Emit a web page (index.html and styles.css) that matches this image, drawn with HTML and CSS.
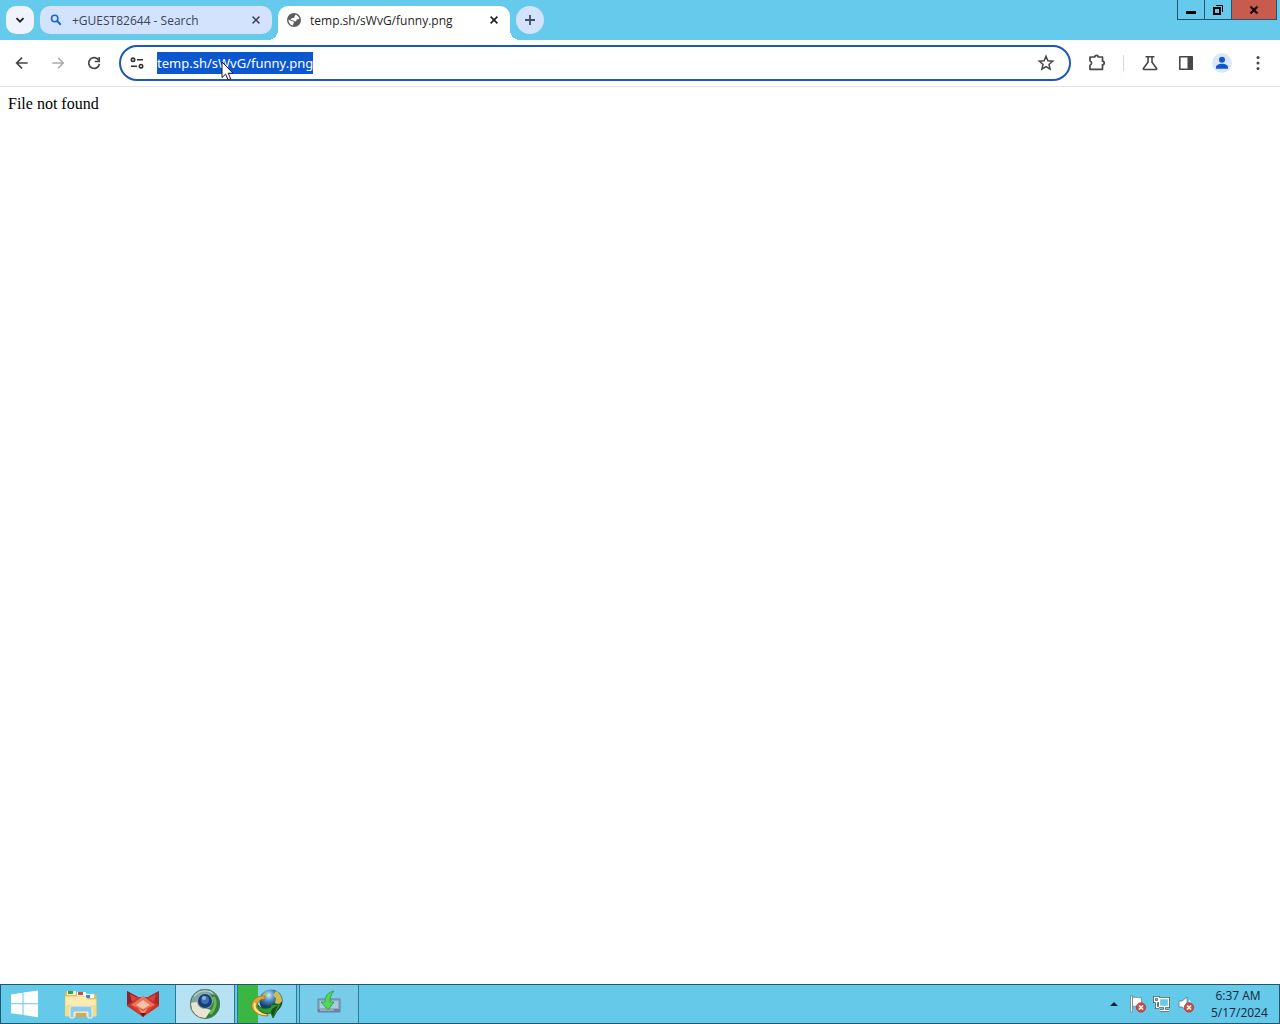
FILE: index.html
```html
<!DOCTYPE html>
<html lang="en">
<head>
<meta charset="UTF-8" />
<meta name="viewport" content="width=device-width, initial-scale=1.0" />
<title>temp.sh/sWvG/funny.png</title>
<link rel="stylesheet" href="styles.css">
</head>
<body>
  <header class="tab-strip">
    <button class="tab-search" aria-label="Search tabs">
      <svg width="10" height="10" viewBox="0 0 10 10"><path d="M1.5 3.2 5 6.7 8.5 3.2" fill="none" stroke="#1f1f1f" stroke-width="1.8"/></svg>
    </button>
    <div class="tab">
      <svg class="tab-icon" width="16" height="16" viewBox="0 0 16 16"><circle cx="6.7" cy="6.5" r="3.2" fill="none" stroke="#1b6ac9" stroke-width="1.6"/><path d="m9.2 9 3.6 3.8" stroke="#1b6ac9" stroke-width="2"/></svg>
      <span class="tab-title">+GUEST82644 - Search</span>
      <button class="tab-close" aria-label="Close tab">
        <svg width="8" height="8" viewBox="0 0 8 8"><path d="m.6.6 6.8 6.8M7.4.6.6 7.4" stroke="#3c4658" stroke-width="1.5"/></svg>
      </button>
    </div>
    <div class="tab active">
      <svg class="tab-icon" width="16" height="16" viewBox="0 0 16 16"><circle cx="8" cy="8" r="7" fill="#5b5d61"/><path d="M2.5 7.5 6 9.300l1.500.2.5 1.500-1 1 .2 1.500C4.500 13.200 2.300 11 2.500 7.500zM9.500 2.700c2 .6 3.300 2 3.900 3.900l-1.400.9-1.400-.2-.3 1.700-1.500.6-1.500-1.200-2.300-.3-.2-1.200 1.700-.9 1.800-.3.300-1.500z" fill="#fff"/></svg>
      <span class="tab-title">temp.sh/sWvG/funny.png</span>
      <button class="tab-close" aria-label="Close tab">
        <svg width="8" height="8" viewBox="0 0 8 8"><path d="m.6.6 6.8 6.8M7.4.6.6 7.4" stroke="#1f1f1f" stroke-width="1.6"/></svg>
      </button>
    </div>
    <button class="new-tab" aria-label="New tab">
      <svg width="12" height="12" viewBox="0 0 12 12"><path d="M6 1v10M1 6h10" stroke="#474f62" stroke-width="1.8"/></svg>
    </button>
    <div class="window-buttons">
      <button class="minimize" aria-label="Minimize">
        <svg width="10" height="10" viewBox="0 0 10 10"><path d="M0 6h10v3H0z"/></svg>
      </button>
      <button class="restore" aria-label="Restore">
        <svg width="10" height="10" viewBox="0 0 10 10"><path d="M1 3h6v6H1z" fill="none" stroke="#000" stroke-width="2"/><path d="M3 .5h6.500V7" fill="none" stroke="#000"/></svg>
      </button>
      <button class="close" aria-label="Close">
        <svg width="10" height="10" viewBox="0 0 10 10"><path d="m1.500 1.500 7 7M8.500 1.500l-7 7" stroke="#1c0906" stroke-width="2.200"/></svg>
      </button>
    </div>
  </header>

  <nav class="toolbar">
    <button class="tool" aria-label="Back">
      <svg width="20" height="20" viewBox="0 0 20 20"><path d="M15.700 10H5M10 4.700 4.700 10l5.300 5.300" fill="none" stroke="#474747" stroke-width="1.700"/></svg>
    </button>
    <button class="tool" aria-label="Forward">
      <svg width="20" height="20" viewBox="0 0 20 20"><path d="M4.300 10H15M10 4.700l5.300 5.300-5.300 5.300" fill="none" stroke="#a9a9a9" stroke-width="1.500"/></svg>
    </button>
    <button class="tool" aria-label="Reload">
      <svg width="20" height="20" viewBox="0 0 20 20"><path d="M14.800 7.400A5.400 5.400 0 1 0 15.400 11" fill="none" stroke="#474747" stroke-width="1.700"/><path d="M15.200 4v4.500h-4.500" fill="none" stroke="#474747" stroke-width="1.700"/></svg>
    </button>

    <div class="omnibox">
      <button class="site-info" aria-label="View site information">
        <svg width="16" height="16" viewBox="0 0 16 16" fill="none" stroke="#303030" stroke-width="1.600"><circle cx="4" cy="4.800" r="1.700"/><path d="M8 4.800h6M2 11.200h6"/><circle cx="12" cy="11.200" r="1.700"/></svg>
      </button>
      <input type="text" id="address" aria-label="Address" value="temp.sh/sWvG/funny.png" spellcheck="false">
      <button class="bookmark" aria-label="Bookmark this tab">
        <svg width="20" height="20" viewBox="0 0 20 20"><path d="m10 3.300 1.900 4.500 4.800.4-3.700 3.200 1.100 4.800-4.100-2.600-4.100 2.600L7 11.400 3.300 8.200l4.800-.4z" fill="none" stroke="#474747" stroke-width="1.500"/></svg>
      </button>
      <svg class="pointer" width="13" height="20" viewBox="0 0 13 20"><path d="M1 1v15.500l3.600-3.400 2.500 5.800 2.600-1.100-2.500-5.600H12z" fill="#fff" stroke="#14142a" stroke-width="1"/></svg>
    </div>

    <button class="tool" aria-label="Extensions">
      <svg width="20" height="20" viewBox="0 0 20 20"><path d="M3 4h4.800a1.700 1.700 0 0 1 3.400 0H15.500v4.200a1.700 1.700 0 0 1 0 3.400v4.700H3v-4.100a2.200 2.200 0 0 0 0-4.200z" fill="none" stroke="#474747" stroke-width="1.700" stroke-linejoin="round"/></svg>
    </button>
    <span class="divider"></span>
    <button class="tool" aria-label="Chrome Labs">
      <svg width="20" height="20" viewBox="0 0 20 20"><path d="M5.500 3.800h9M8 4v5.200l-4.600 6.300c-.3.5 0 1 .6 1h12c.6 0 .9-.5.6-1L12 9.200V4" fill="none" stroke="#474747" stroke-width="1.600"/></svg>
    </button>
    <button class="tool" aria-label="Side panel">
      <svg width="20" height="20" viewBox="0 0 20 20"><path d="M3.800 3.800h12.400v12.400H3.800z" fill="none" stroke="#474747" stroke-width="1.600" stroke-linejoin="round"/><path d="M11.500 3.800h5v12.400h-5z" fill="#474747"/></svg>
    </button>
    <button class="tool" aria-label="Profile">
      <svg width="20" height="20" viewBox="0 0 20 20"><circle cx="10" cy="10" r="10" fill="#dde7fc"/><circle cx="10" cy="6.800" r="3" fill="#0b57d0"/><path d="M4 15.800v-1.500c0-2.300 3-3.500 6-3.500s6 1.200 6 3.500v1.500z" fill="#0b57d0"/></svg>
    </button>
    <button class="tool" aria-label="Menu">
      <svg width="20" height="20" viewBox="0 0 20 20" fill="#474747"><circle cx="10" cy="4.500" r="1.500"/><circle cx="10" cy="10" r="1.500"/><circle cx="10" cy="15.500" r="1.500"/></svg>
    </button>
  </nav>

  <main class="page">File not found</main>

  <footer class="taskbar">
    <button class="start" aria-label="Start">
      <svg width="28" height="28" viewBox="0 0 28 28" fill="#fff"><path d="M0 4.500 11.500 2.700v10.600H0zM12.500 2.500 27 .5v12.800H12.500zM0 14.300h11.500v10.500L0 23.200zM12.500 14.300H27v12.900l-14.500-2.100z"/></svg>
    </button>
    <button class="task plain" aria-label="File Explorer">
      <svg width="34" height="30" viewBox="0 0 34 30">
        <path d="M1 4c0-1 .5-1.500 1.500-1.500h9L13 5h18c1 0 1.500.5 1.500 1.500V27H1z" fill="#e0bd60"/>
        <path d="M3 2h9v4H3z" fill="#f6f4dc"/><path d="M4 2h5v3H4z" fill="#3f9b45"/>
        <path d="M13 3h9v4h-9z" fill="#fff"/><path d="M14 3h5v3h-5z" fill="#cc4c35"/>
        <path d="M21 5h9v4h-9z" fill="#fff"/><path d="M22 6h4v3h-4z" fill="#378cc7"/>
        <path d="M1 7h20l3 3h8.500v16c0 1-.5 1.500-1.500 1.500H2.500C1.500 27.500 1 27 1 26z" fill="#f3dc8b"/>
        <path d="M2 8h19l3 3h7.500v5H2z" fill="#fbebaf"/>
        <path d="M6 29V20c0-2 1-3 3-3h16c2 0 3 1 3 3v9h-4v-6H10v6z" fill="#8ecbe9" stroke="#e6f6fd"/>
        <path d="M12 24h10v4H12z" fill="#d9a848"/>
      </svg>
    </button>
    <button class="task plain" aria-label="Fox">
      <svg width="34" height="28" viewBox="0 0 34 28">
        <path d="M1 1 12 7h10L33 1v15L17 27 1 16z" fill="#c63430"/>
        <path d="m1 1 11 6-6 5-5 3z" fill="#86262b"/><path d="m33 1-11 6 6 5 5 3z" fill="#a62a2b"/>
        <path d="m4 4 8 4-6 4zM30 4l-8 4 6 4z" fill="#df4038"/>
        <path d="m17 6 12 9-12 7-12-7z" fill="#ed7359"/><path d="m17 10 7 5-7 4-7-4z" fill="#f9c4a5"/>
        <path d="m5 15 12 5 12-5-12 12z" fill="#dc3e36"/><path d="m12 18 5 3 5-3-5 7z" fill="#f0987d"/><path d="m14 23 3 4 3-4z" fill="#541f29"/>
      </svg>
    </button>
    <button class="task current" aria-label="Chromium">
      <svg width="32" height="32" viewBox="0 0 32 32">
        <circle cx="16" cy="16" r="15" fill="#2d8038"/>
        <path d="M1 16C1 7 8 1 16 1c5 0 9 2 12 6L16 6 9 18z" fill="#7fa8a0"/>
        <path d="M5 8c5-6 13-7 19-3" fill="none" stroke="#b7d2cd" stroke-width="2"/>
        <path d="M24 9c4 5 2 12-3 17" fill="none" stroke="#67b655" stroke-width="3"/>
        <path d="M1.500 15 8 14c1 5 5 7 11 7l3 1-6 9C7 31 1 24 1.500 15z" fill="#e9e5d0"/>
        <circle cx="16" cy="13" r="8" fill="#8facb8"/><circle cx="16" cy="13" r="7" fill="#193e75"/><circle cx="16" cy="12" r="4" fill="#3f70b5"/><circle cx="15" cy="10" r="2" fill="#8bb4dd"/>
        <circle cx="16" cy="16" r="14.500" fill="none" stroke="#56736e"/>
      </svg>
    </button>
    <button class="task progress" aria-label="Download manager">
      <svg width="34" height="32" viewBox="0 0 34 32">
        <defs><radialGradient id="globe" cx=".4" cy=".25"><stop offset="0" stop-color="#d5ebfa"/><stop offset=".5" stop-color="#4b8fc7"/><stop offset="1" stop-color="#173d6a"/></radialGradient></defs>
        <circle cx="21" cy="13" r="11.500" fill="url(#globe)"/>
        <path d="M26 3c4 2 6 6 6 10l-3 4-4-2 1-5-3-3z" fill="#d0bd48"/><path d="m13 6 5-3-2 5-5 3z" fill="#b9bd57"/>
        <path d="M15 8C6 7 0 14 2 20c2 5 8 8 16 8l-1-4C9 25 5 20 7 16c1-3 4-5 8-5z" fill="#e8a22e" stroke="#a56728" stroke-width=".7"/>
        <path d="M5 15c-2 6 3 11 11 11" fill="none" stroke="#f6ec8a" stroke-width="2"/>
        <path d="M8 17c3 4 8 4 13 2l-1-2 11-1-8 14-2-5c-7 2-13-1-13-8z" fill="#339c2f" stroke="#1b551e" stroke-width=".8"/>
        <path d="m22 21 6-4-5 12-2-5z" fill="#174f21"/>
      </svg>
    </button>
    <button class="task" aria-label="Installer">
      <svg width="26" height="28" viewBox="0 0 26 28">
        <path d="M2 9h22v13H2z" fill="#8facc4" stroke="#5e81a0"/><path d="M4 11h18v7H4z" fill="#a9cbdf"/><path d="M2 19h22v3H2z" fill="#6f80a3"/><path d="M4 20h14" stroke="#c1d0df"/>
        <path d="M18 1C12 2 9 6 9 12H5l7 8 6-8h-4c0-4 1-8 4-11z" fill="#55d65b" stroke="#30a84a"/>
      </svg>
    </button>
    <div class="tray">
      <button aria-label="Show hidden icons"><svg width="8" height="4" viewBox="0 0 8 4"><path d="M0 4 4 0l4 4z" fill="#14233c"/></svg></button>
      <button aria-label="Action Center">
        <svg width="18" height="18" viewBox="0 0 18 18"><path d="M1.500 1h2v16h-2z" fill="#fff" stroke="#65727c" stroke-width=".7"/><path d="M3.500 2.500c3-1 5 1 9 0v9c-4 1-6-1-9 0z" fill="#fff" stroke="#65727c" stroke-width=".7"/><circle cx="12" cy="12.500" r="4.700" fill="#d54a41" stroke="#a13734" stroke-width=".7"/><path d="m10 10.500 4 4m0-4-4 4" stroke="#fff" stroke-width="1.700"/></svg>
      </button>
      <button aria-label="Network">
        <svg width="18" height="18" viewBox="0 0 18 18"><path d="M6.500 3.500h9v8h-9zM7 15.500h9M11.500 12v3M1.500 2.500h4v4h-4zM3.500 6.500v6H6" fill="none" stroke="#405463" stroke-width="2.800"/><path d="M6.500 3.500h9v8h-9z" fill="#65c9e9"/><path d="M6.500 3.500h9v8h-9zM7 15.500h9M11.500 12v3M1.500 2.500h4v4h-4zM3.500 6.500v6H6" fill="none" stroke="#fff" stroke-width="1.300"/></svg>
      </button>
      <button aria-label="Volume">
        <svg width="18" height="18" viewBox="0 0 18 18"><path d="M2 6h3l5-4v14l-5-4H2z" fill="#fff" stroke="#526674" stroke-width=".7"/><path d="M12 5c1 1 1 2 1 3" fill="none" stroke="#fff"/><circle cx="12" cy="12.500" r="4.700" fill="#d54a41" stroke="#a13734" stroke-width=".7"/><path d="m10 10.500 4 4m0-4-4 4" stroke="#fff" stroke-width="1.700"/></svg>
      </button>
      <div class="clock">
        <div>6:37 AM</div>
        <div>5/17/2024</div>
      </div>
    </div>
  </footer>

<script>
  document.getElementById('address').select();
</script>
</body>
</html>
```
FILE: styles.css
```css
* {
  box-sizing: border-box;
}

body {
  margin: 0;
  min-height: 100vh;
  display: flex;
  flex-direction: column;
  background: #fff;
  font-family: "Open Sans", "Noto Sans", sans-serif;
  font-size: 12px;
  color: #1f1f1f;
}

button {
  display: flex;
  align-items: center;
  justify-content: center;
  flex: none;
  padding: 0;
  border: none;
  background: none;
}

svg {
  display: block;
  flex: none;
}

/* tabs */
.tab-strip {
  display: flex;
  height: 40px;
  padding: 6px 3px 0 6px;
  gap: 6px;
  background: #65caeb;
}

.tab-search {
  width: 28px;
  height: 28px;
  border-radius: 10px;
  background: #eef3fe;
}

.tab {
  display: flex;
  align-items: center;
  flex: 0 1 232px;
  height: 28px;
  padding: 0 8px;
  border-radius: 10px;
  background: #d3e3fd;
  color: #3c4454;
}

.tab.active {
  position: relative;
  height: 34px;
  padding-bottom: 6px;
  border-radius: 10px 10px 0 0;
  background: #fff;
  color: #1f1f1f;
}

/* curved feet of the active tab */
.tab.active::before,
.tab.active::after {
  content: "";
  position: absolute;
  bottom: 0;
  width: 10px;
  height: 10px;
}

.tab.active::before {
  left: -10px;
  background: radial-gradient(circle at 0 0, transparent 10px, #fff 10px);
}

.tab.active::after {
  right: -10px;
  background: radial-gradient(circle at 100% 0, transparent 10px, #fff 10px);
}

.tab-title {
  flex: 1;
  margin-left: 8px;
  white-space: nowrap;
  overflow: hidden;
}

.tab-close {
  width: 16px;
  height: 16px;
}

.new-tab {
  width: 28px;
  height: 28px;
  border-radius: 50%;
  background: #d3e3fd;
}

.window-buttons {
  display: flex;
  height: 20px;
  margin-top: -6px;
  margin-left: auto;
  border: 1px solid #24536a;
  border-top: none;
}

.minimize,
.restore {
  width: 27px;
  border-right: 1px solid #24536a;
}

.close {
  width: 44px;
  background: #c75b4e;
}

/* toolbar */
.toolbar {
  display: flex;
  align-items: center;
  height: 47px;
  padding: 0 4px;
  border-bottom: 1px solid #e2e5e0;
}

.tool {
  width: 36px;
  height: 36px;
}

.omnibox {
  position: relative;
  display: flex;
  align-items: center;
  flex: 1;
  height: 36px;
  margin: 0 8px 0 7px;
  padding: 0 13px 0 8px;
  border: 2px solid #1b59b8;
  border-radius: 18px;
  background: #fff;
}

.site-info {
  width: 16px;
  height: 16px;
}

.omnibox input {
  flex: 1;
  min-width: 0;
  height: 22px;
  margin-left: 12px;
  padding: 0;
  border: none;
  outline: none;
  background: none;
  font-family: "Noto Sans", "Open Sans", sans-serif;
  font-size: 13px;
  line-height: 22px;
  color: #1f1f1f;
}

.omnibox input::selection {
  background: #0b57d0;
  color: #fff;
}

.pointer {
  position: absolute;
  left: 100px;
  top: 14px;
}

.divider {
  width: 1px;
  height: 16px;
  margin: 0 8px;
  background: #cbdaf2;
}

/* page */
.page {
  flex: 1;
  padding: 8px;
  font-family: "Liberation Serif", serif;
  font-size: 16px;
  line-height: 18px;
  color: #000;
}

/* taskbar */
.taskbar {
  display: flex;
  height: 40px;
  border: 1px solid #225670;
  background: #65c9e9;
}

.start {
  width: 48px;
  margin-right: 2px;
}

.task {
  width: 60px;
  margin-right: 2px;
  border: 1px solid #317791;
  border-top: none;
  border-bottom: none;
  background: #76cce9;
}

.task.plain {
  border-color: transparent;
  background: none;
}

.task.current {
  background: #b6e2f4;
}

.task.progress {
  background: linear-gradient(to right, #3ab642 20px, #83d3ef 20px);
}

.tray {
  display: flex;
  align-items: center;
  gap: 6px;
  margin-left: auto;
  padding-right: 14px;
}

.tray button {
  min-width: 18px;
  height: 24px;
}

.clock {
  width: 54px;
  margin-left: 10px;
  text-align: center;
  line-height: 17px;
  white-space: nowrap;
  color: #10263a;
}
```
